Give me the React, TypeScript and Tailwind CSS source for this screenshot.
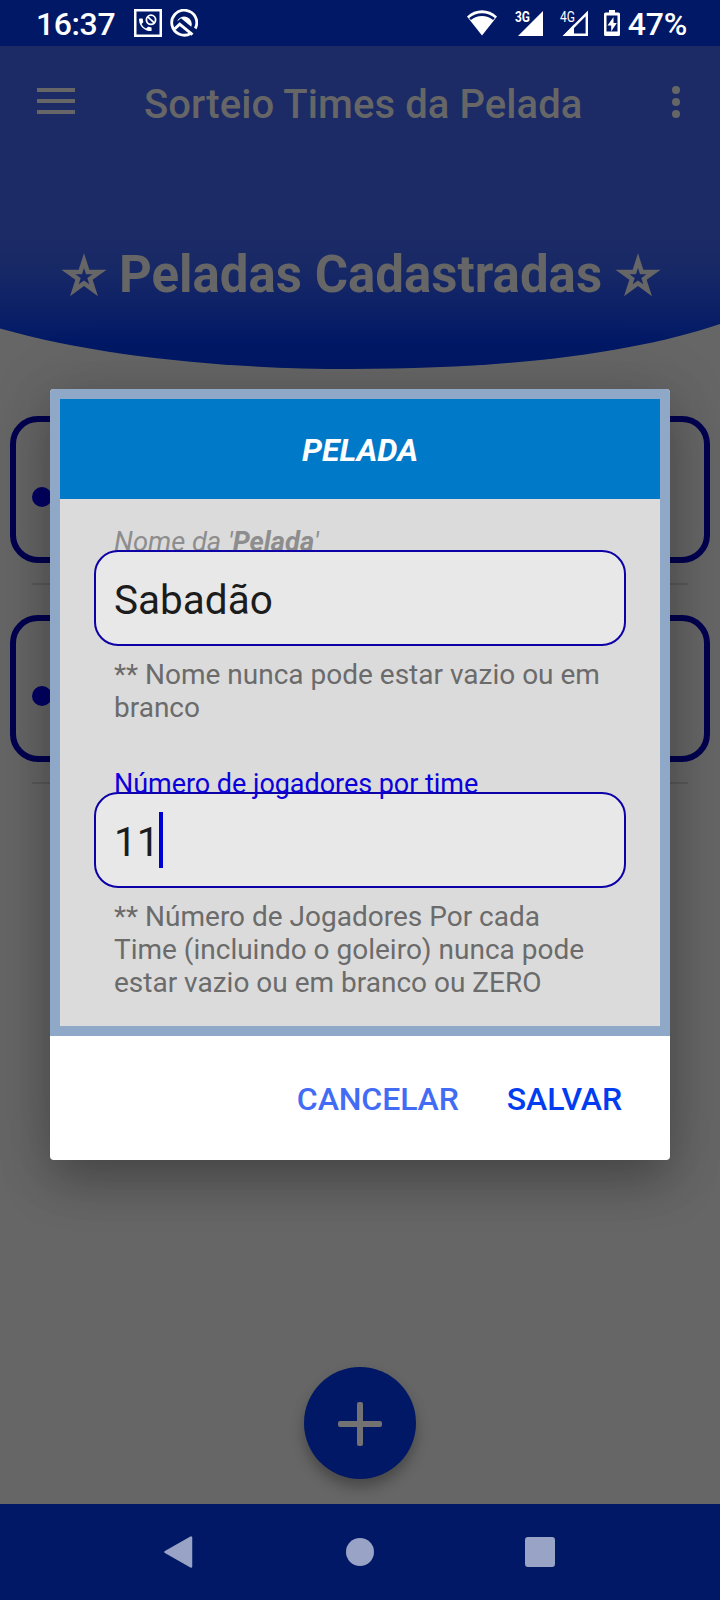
import type { ReactNode } from 'react';

function StatusBar() {
  return (
    <div className="h-[46px] shrink-0 bg-[#001866] flex items-center text-white font-medium pl-[36px] pr-[33px]">
      <span className="text-[32px] leading-[46px] w-[98px] tracking-[-0.4px] pt-[2px]">16:37</span>
      {/* blocked calls */}
      <svg width="28" height="28" viewBox="0 0 28 28" fill="none" stroke="#fff">
        <rect x="1.25" y="1.25" width="25.5" height="25.5" strokeWidth="2.5" />
        <path
          transform="translate(2.9 7.4) scale(0.7)"
          stroke="none"
          fill="#fff"
          d="M6.62 10.79c1.44 2.83 3.76 5.14 6.59 6.59l2.2-2.2c.27-.27.67-.36 1.02-.24 1.12.37 2.33.57 3.57.57.55 0 1 .45 1 1V20c0 .55-.45 1-1 1-9.39 0-17-7.61-17-17 0-.55.45-1 1-1h3.5c.55 0 1 .45 1 1 0 1.25.2 2.45.57 3.57.11.35.03.74-.25 1.02z"
        />
        <circle cx="17" cy="10.8" r="4.6" strokeWidth="1.8" />
        <path d="M13.8 7.8l6.4 6" strokeWidth="1.8" />
      </svg>
      <svg className="ml-[8px]" width="28" height="28" viewBox="0 0 28 28" fill="none">
        <path d="M21 24.200A12.500 12.500 0 1 1 25.300 19.500" stroke="#fff" strokeWidth="2.800" />
        <path d="M7 12.500A7.600 7.600 0 1 1 21.300 17.800L11 9.300z" fill="#fff" />
        <path d="M4.500 20l5.200-4.800 12.800 10.500" stroke="#fff" strokeWidth="3" />
      </svg>

      <div className="ml-auto flex items-center">
        <svg width="30" height="26" viewBox="0 0 30 26" fill="#fff">
          <path d="M0 6.500C8.500-2 21.500-2 30 6.500L15 25.500z" />
          <path d="M3 9C10 3.100 20 3.100 27 9" stroke="#001866" strokeWidth="2.800" fill="none" />
        </svg>
        <svg className="ml-[18px]" width="28" height="36" viewBox="0 -5 28 36">
          <path d="M28 1v25H3z" fill="#fff" />
          <text x="0" y="12" fill="#fff" fontSize="15" fontWeight="700" textLength="15" lengthAdjust="spacingAndGlyphs">3G</text>
        </svg>
        <svg className="ml-[17px]" width="28" height="36" viewBox="0 -5 28 36">
          <path d="M26.800 3.500v21.300H5.500z" fill="none" stroke="#fff" strokeWidth="2.400" />
          <path d="M14 14.500V26H3z" fill="#fff" />
          <text x="0" y="12" fill="#fff" fontSize="15" fontWeight="400" textLength="15" lengthAdjust="spacingAndGlyphs">4G</text>
        </svg>
        <svg className="ml-[16px]" width="16" height="26" viewBox="0 0 16 26">
          <path d="M5 0h6v2.500h3.500q1.500 0 1.500 1.500v20.500q0 1.500-1.500 1.500h-13Q0 26 0 24.500V4q0-1.500 1.500-1.500H5z" fill="#fff" />
          <path d="M2.500 5.500h11v16h-11z" fill="#001866" />
          <path d="M9.500 7L3.500 15.500H7.200V21.500L12.800 13H9.500z" fill="#fff" />
        </svg>
        <span className="ml-[8px] text-[32px] leading-[46px] tracking-[-0.2px] pt-[2px]">47%</span>
      </div>
    </div>
  );
}

function Toolbar() {
  return (
    <div className="h-[113px] shrink-0 bg-[#1c2b66] flex items-center pl-[37px] pr-[40px]">
      <div className="flex flex-col gap-[7px] -mt-[3px]">
        <span className="w-[38px] h-1 bg-[#666]" />
        <span className="w-[38px] h-1 bg-[#666]" />
        <span className="w-[38px] h-1 bg-[#666]" />
      </div>
      <h1 className="ml-[69px] mt-1 text-[40px] leading-[48px] tracking-[0.08px] font-medium text-[#666]">Sorteio Times da Pelada</h1>
      <div className="ml-auto -mt-px flex flex-col gap-1">
        <span className="size-2 rounded-full bg-[#666]" />
        <span className="size-2 rounded-full bg-[#666]" />
        <span className="size-2 rounded-full bg-[#666]" />
      </div>
    </div>
  );
}

function Star() {
  return (
    <svg width="46" height="44" viewBox="-23 -24 46 44" fill="#666" fillRule="evenodd">
      <path d="M0-23.800L5.340-7.350 22.640-7.350 8.650 2.810 13.990 19.250 0 9.090-13.990 19.250-8.650 2.810-22.640-7.350-5.340-7.350zM0-9L2.020-2.780 8.560-2.780 3.270 1.060 5.290 7.280 0 3.440-5.290 7.280-3.270 1.060-8.560-2.780-2.020-2.780z" />
    </svg>
  );
}

function Hero() {
  return (
    <div className="relative h-[211px] shrink-0">
      <svg className="absolute inset-0" width="720" height="211" viewBox="0 0 720 211">
        <defs>
          <linearGradient id="hero" gradientUnits="userSpaceOnUse" x1="0" y1="80" x2="0" y2="188">
            <stop offset="0" stopColor="#1c2b66" />
            <stop offset="0.3" stopColor="#172866" />
            <stop offset="1" stopColor="#001866" />
          </linearGradient>
        </defs>
        <path d="M0 0H720V165C640 192 520 210 350 210C230 210 100 198 0 169.500z" fill="url(#hero)" />
      </svg>
      <div className="relative flex items-center justify-center pt-[86px] pl-[2px]">
        <Star />
        <h2 className="ml-[12px] mr-[13px] text-[51px] leading-[60px] font-bold text-[#666]">Peladas Cadastradas</h2>
        <Star />
      </div>
    </div>
  );
}

function ListCard() {
  return (
    <div>
      <div className="mx-[10px] h-[147px] rounded-[28px] border-[6px] border-[#000050] flex items-center pl-[16px] pt-[15px]">
        <span className="size-5 rounded-full bg-[#000066]" />
      </div>
      <div className="mt-5 mx-8 h-[2px] bg-[#5a5a5a]" />
    </div>
  );
}

type FieldProps = {
  label: ReactNode;
  labelClass: string;
  value: string;
  helper: ReactNode;
  focused?: boolean;
};

function Field({ label, labelClass, value, helper, focused }: FieldProps) {
  return (
    <div>
      <div className={`pl-5 h-5 -mb-[2px] leading-5 whitespace-nowrap ${labelClass}`}>{label}</div>
      <div className="relative h-24 rounded-[24px] border-2 border-[#0c00a6] bg-[#e8e8e8] pl-[18px] flex items-center text-[40.5px] leading-[56px] text-[#1c1c1c]">
        <span className="mt-1">{value}</span>
        {focused && <span className="-ml-px w-1 h-14 bg-[#0000d2]" />}
      </div>
      <p className="mt-3 pl-5 text-[28px] leading-[33px] text-[#6b6b6b] whitespace-nowrap">{helper}</p>
    </div>
  );
}

function PeladaDialog() {
  return (
    <div className="w-[620px] h-[771px] rounded-[4px] overflow-hidden bg-white flex flex-col">
      <div className="p-[10px] bg-[#8fa8c8]">
        <div className="h-[100px] pt-[2px] bg-[#007ac8] flex items-center justify-center text-white text-[32px] font-bold italic">
          PELADA
        </div>
        <div className="h-[527px] bg-[#dbdbdb] pt-[33px] pl-[34px] pr-[34px] flex flex-col gap-[50px]">
          <Field
            label={<>Nome da '<b>Pelada</b>'</>}
            labelClass="text-[27.3px] italic text-[#8d8d8d]"
            value="Sabadão"
            helper={<>** Nome nunca pode estar vazio ou em<br />branco</>}
          />
          <Field
            label="Número de jogadores por time"
            labelClass="relative z-10 text-[27px] tracking-[-0.04px] text-[#0c00dc]"
            value="11"
            helper={<>** Número de Jogadores Por cada<br />Time (incluindo o goleiro) nunca pode<br />estar vazio ou em branco ou ZERO</>}
            focused
          />
        </div>
      </div>
      <div className="flex-1 flex items-center justify-end gap-12 pt-[2px] pr-12 text-[32px] tracking-[-0.1px] font-medium">
        <button className="text-[#436cf5]">CANCELAR</button>
        <button className="text-[#003cf0]">SALVAR</button>
      </div>
    </div>
  );
}

function NavBar() {
  return (
    <div className="h-24 shrink-0 bg-[#001866] flex items-center px-[90px]">
      <div className="w-[180px] flex justify-center">
        <svg width="32" height="32" viewBox="0 0 32 32">
          <path d="M1.500 16L27 1.500V30.500z" fill="#99a3c5" stroke="#99a3c5" strokeWidth="2.500" strokeLinejoin="round" />
        </svg>
      </div>
      <div className="w-[180px] flex justify-center">
        <span className="size-7 rounded-full bg-[#99a3c5]" />
      </div>
      <div className="w-[180px] flex justify-center">
        <span className="size-[30px] rounded-[3px] bg-[#99a3c5]" />
      </div>
    </div>
  );
}

export default function App() {
  return (
    <div className="relative w-[720px] h-[1600px] overflow-hidden bg-[#666] flex flex-col font-['Roboto',sans-serif]">
      <StatusBar />
      <Toolbar />
      <Hero />
      <div className="flex-1 pt-[46px] flex flex-col gap-[30px]">
        <ListCard />
        <ListCard />
        <button className="mt-auto mb-[25px] mx-auto size-28 shrink-0 pt-px rounded-full bg-[#001866] flex items-center justify-center shadow-[0_8px_14px_rgba(0,0,0,0.3)]">
          <svg width="44" height="44" viewBox="0 0 44 44" fill="#727272">
            <rect x="19" y="0" width="6" height="44" rx="2" />
            <rect x="0" y="19" width="44" height="6" rx="2" />
          </svg>
        </button>
      </div>
      <NavBar />

      <div className="absolute inset-0 pt-[389px] flex justify-center items-start">
        <div className="rounded-[4px] shadow-[0_22px_48px_rgba(0,0,0,0.26),0_0_70px_rgba(0,0,0,0.12)]">
          <PeladaDialog />
        </div>
      </div>
    </div>
  );
}
